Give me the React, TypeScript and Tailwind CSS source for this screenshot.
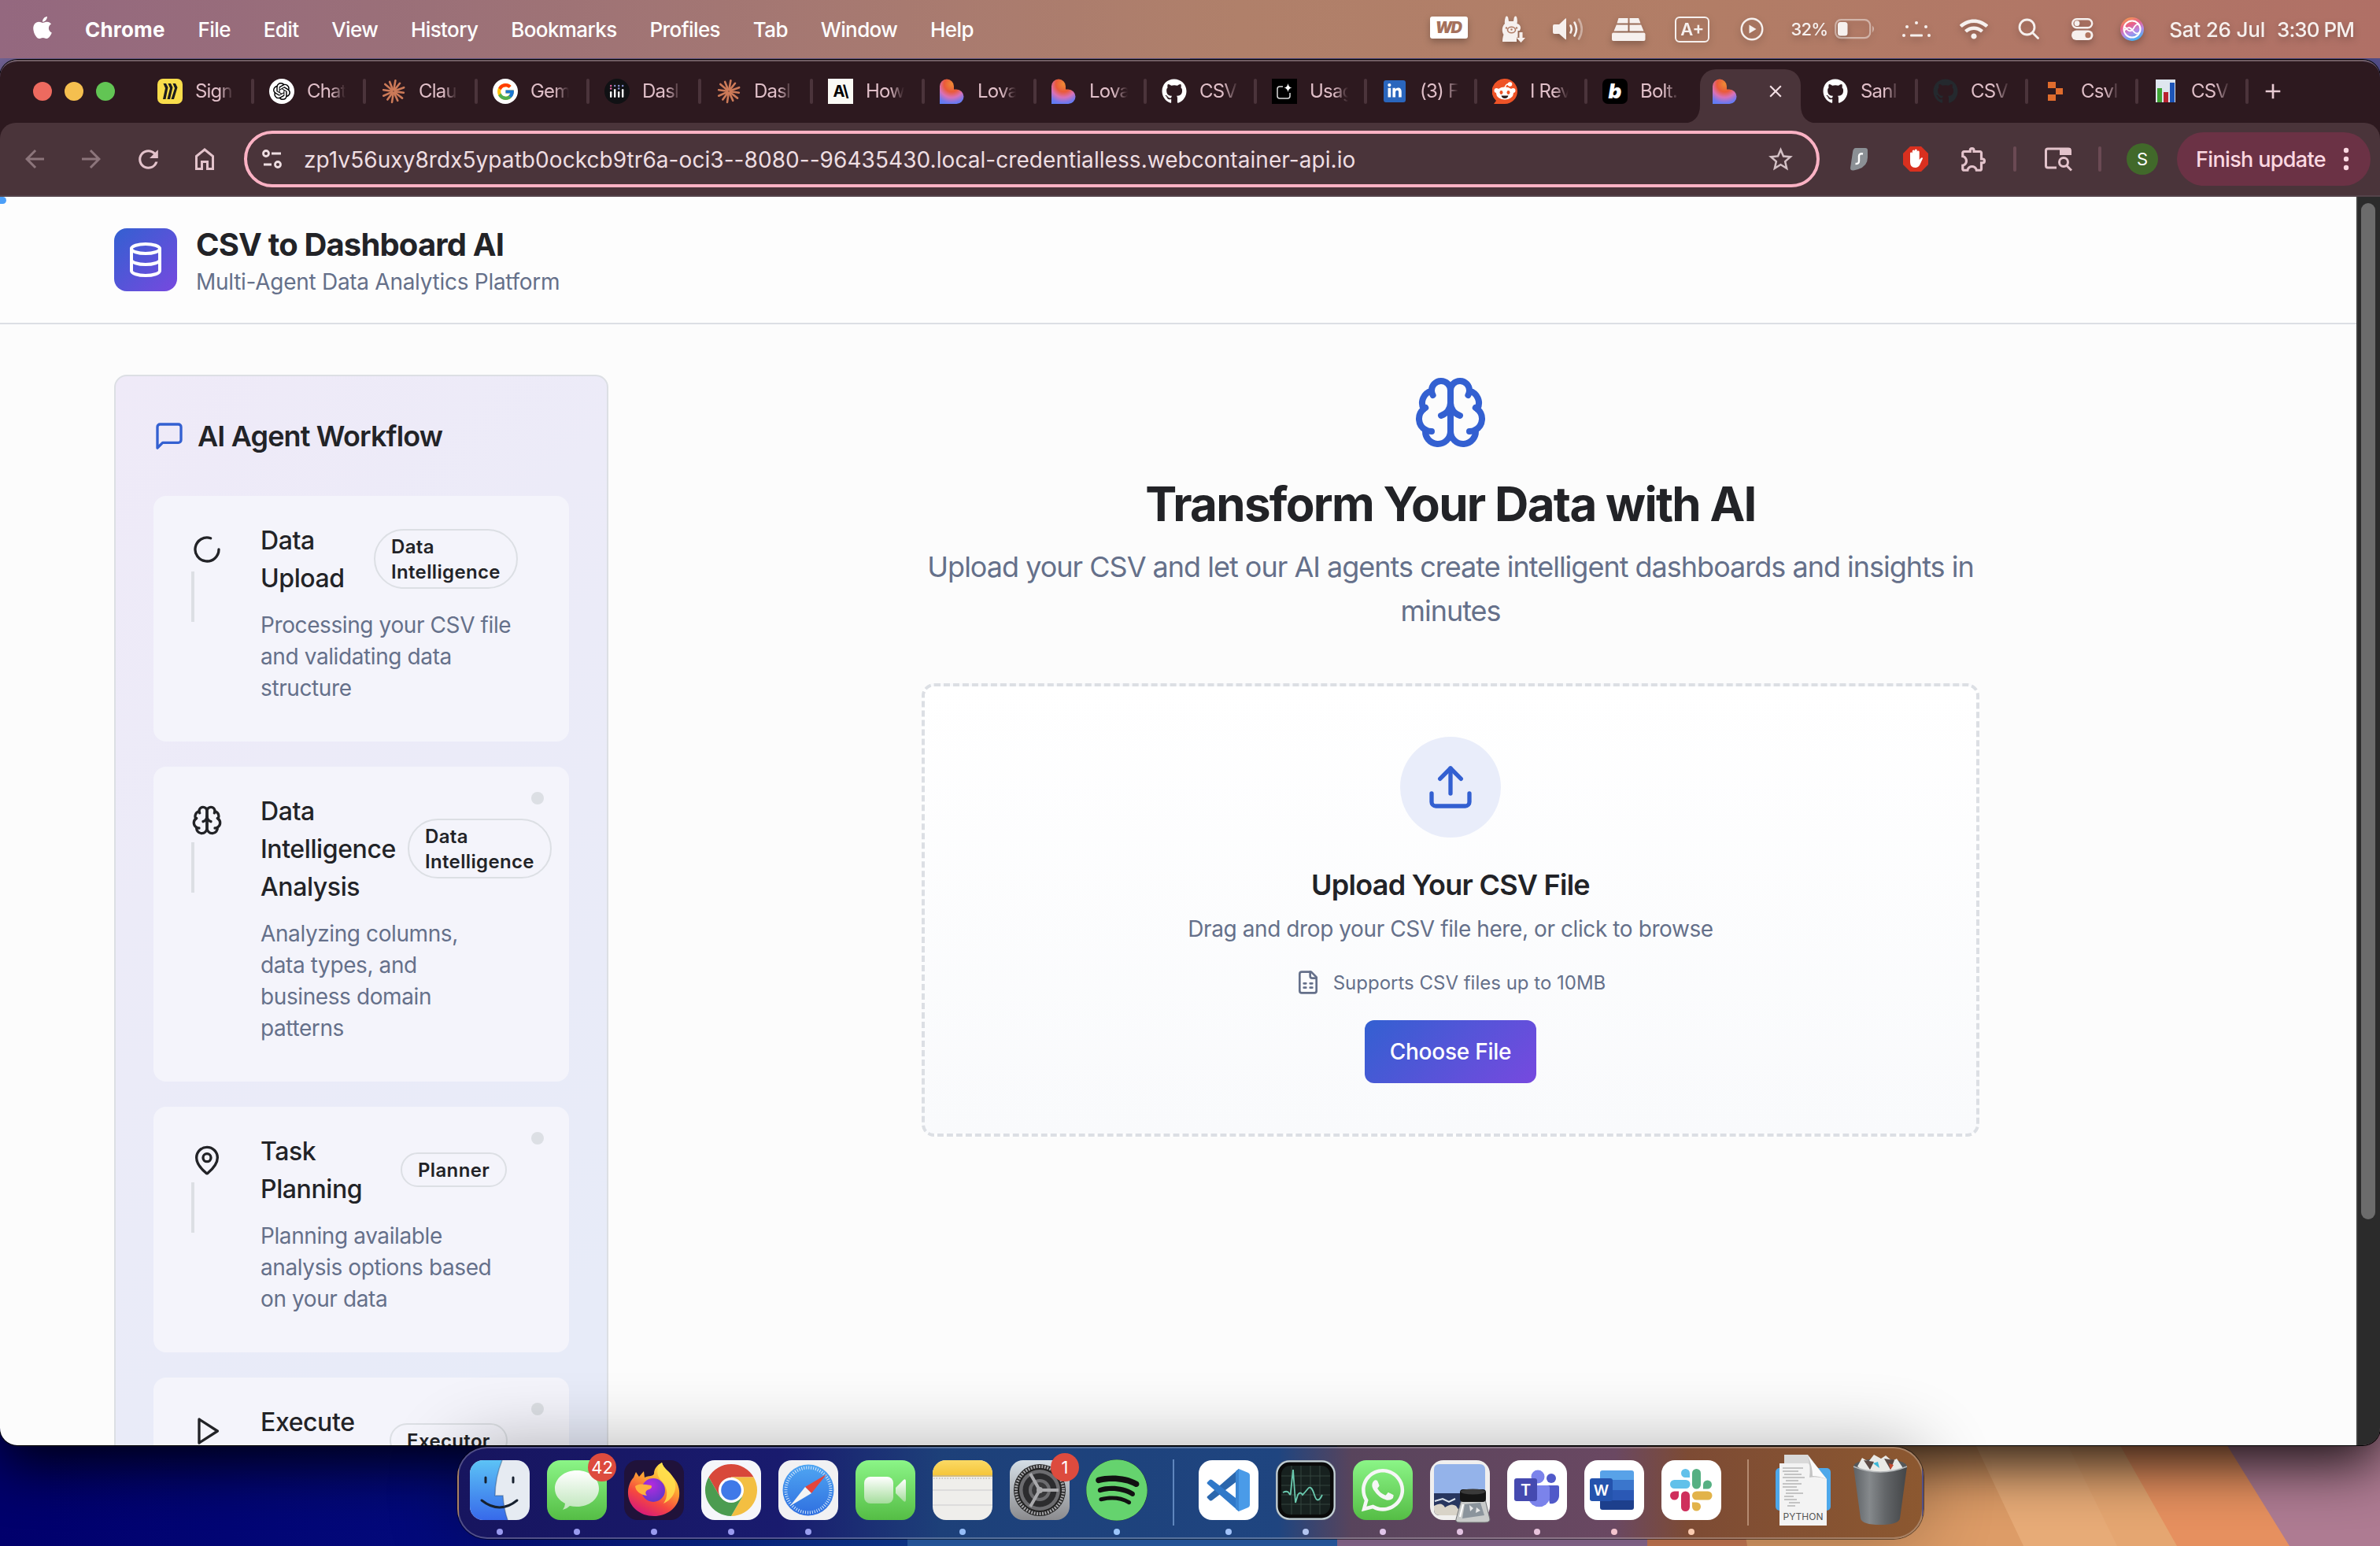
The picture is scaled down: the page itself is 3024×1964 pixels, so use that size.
import React from "react";
import { FaApple, FaGithub, FaWifi, FaWhatsapp, FaLinkedinIn, FaSpotify } from "react-icons/fa";
import { FcGoogle } from "react-icons/fc";
import { SiOpenai } from "react-icons/si";
import { MdArrowBack, MdArrowForward, MdRefresh, MdStarOutline, MdOutlineExtension, MdClose, MdAdd } from "react-icons/md";

type Kids = { children?: React.ReactNode };

function Glyph({ size, stroke = 2, className = "", children }: Kids & { size: number; stroke?: number; className?: string }) {
  return (
    <svg width={size} height={size} viewBox="0 0 24 24" fill="none" stroke="currentColor" strokeWidth={stroke} strokeLinecap="round" strokeLinejoin="round" className={"shrink-0 " + className}>
      {children}
    </svg>
  );
}

const brain = (
  <>
    <path d="M12 5a3 3 0 1 0-5.997.125 4 4 0 0 0-2.526 5.77 4 4 0 0 0 .556 6.588A4 4 0 1 0 12 18Z" />
    <path d="M12 5a3 3 0 1 1 5.997.125 4 4 0 0 1 2.526 5.77 4 4 0 0 1-.556 6.588A4 4 0 1 1 12 18Z" />
    <path d="M15 13a4.5 4.5 0 0 1-3-4 4.5 4.5 0 0 1-3 4" />
    <path d="M17.599 6.5a3 3 0 0 0 .399-1.375" />
    <path d="M6.003 5.125A3 3 0 0 0 6.401 6.5" />
    <path d="M3.477 10.896a4 4 0 0 1 .585-.396" />
    <path d="M19.938 10.5a4 4 0 0 1 .585.396" />
    <path d="M6 18a4 4 0 0 1-1.967-.516" />
    <path d="M19.967 17.484A4 4 0 0 1 18 18" />
  </>
);

/* ---------- menu bar ---------- */

function MenuBar() {
  return (
    <div className="relative z-10 flex h-[74px] w-full items-center bg-[linear-gradient(90deg,#94687f_0%,#9b7078_18%,#a87a70_38%,#b0806a_52%,#b27d66_72%,#b07066_100%)] pl-[40px] text-[26px] font-medium text-white">
      <FaApple className="-mt-1 h-[32px] w-[28px]" />
      <div className="ml-[40px] flex items-center gap-[41.8px] tracking-[-0.6px]">
        <span className="font-bold tracking-[0.2px]">Chrome</span>
        <span>File</span>
        <span>Edit</span>
        <span>View</span>
        <span>History</span>
        <span>Bookmarks</span>
        <span>Profiles</span>
        <span>Tab</span>
        <span>Window</span>
        <span>Help</span>
      </div>
      <div className="ml-auto flex items-center pr-[33px] text-[#f6f0ee] drop-shadow-[0_4px_4px_rgba(0,0,0,0.25)]">
        <span className="-mt-[4px] flex h-[28px] w-[48px] items-center justify-center rounded-[3px] bg-white pr-[3px] text-[20px] font-black italic tracking-[-2px] text-[#a5715c]">WD</span>
        <svg className="ml-[43px]" width="30" height="34" viewBox="0 0 30 34" fill="#f6f0ee">
          <path d="M5 1.500c1.500-2 3.200-.5 3.500 2.500l.5 3h6l.5-3c.3-3 2-4.500 3.500-2.500 1 3 1 6 .5 8.500q5 1.500 4.500 6l-1 3h-2.500v10.500l-1.500-1V33H1c0-4 .5-6 1.500-9C0 20 0 14 4 10 3.500 7.500 4 4.500 5 1.500z" />
          <ellipse cx="12.500" cy="18" rx="5" ry="3.800" fill="none" stroke="#b07c66" strokeWidth="1.600" />
          <circle cx="12.500" cy="17.500" r="1.200" fill="#b07c66" />
          <circle cx="6" cy="15.500" r="1.200" fill="#b07c66" />
          <circle cx="19" cy="15.500" r="1.200" fill="#b07c66" />
          <path d="M22.500 21h4v7h3.500l-5.500 6-5.500-6h3.500z" stroke="#b07c66" strokeWidth="1" paintOrder="stroke" />
        </svg>
        <svg className="ml-[35px]" width="39" height="30" viewBox="0 0 39 30" fill="none" stroke="#f6f0ee" strokeWidth="2.600" strokeLinecap="round">
          <path d="M0 11q0-2 2-2h6l8-7.500q1-.8 1 .8v25q0 1.600-1 .8L8 21H2q-2 0-2-2z" fill="#f6f0ee" stroke="none" />
          <path d="M22.500 10.500q2.500 4.500 0 9M27.500 6.500q5 8.500 0 17" />
          <path d="M33 2.500q7.500 12.500 0 25" opacity=".45" />
        </svg>
        <svg className="ml-[36px]" width="43" height="29" viewBox="0 0 43 29" fill="#f6f0ee">
          <path d="M8.500 0H20.500V6.500H6.500zM22.500 0H34l2.500 6.500h-14zM5.800 8.500H20.500V16.500H2.500zM22.500 8.500H37.200l3.300 8h-18z" />
          <rect y="18.500" width="42.500" height="10.500" rx="2" />
        </svg>
        <span className="ml-[37px] flex h-[33px] w-[44px] items-center justify-center rounded-[6px] border-[2.500px] border-[#f6f0ee] text-[22px] font-semibold">A+</span>
        <svg className="ml-[39px]" width="30" height="30" viewBox="0 0 30 30" fill="none" stroke="#f6f0ee" strokeWidth="2.400">
          <circle cx="15" cy="15" r="13.300" />
          <path d="M11.500 9.500l9 5.500-9 5.500z" fill="#f6f0ee" stroke="none" />
        </svg>
        <span className="ml-[34px] text-[22px] tracking-[-0.8px]">32%</span>
        <svg className="ml-[9px]" width="52" height="26" viewBox="0 0 52 26">
          <rect x="1.200" y="1.200" width="44" height="23" rx="7" fill="none" stroke="#f6f0ee" strokeOpacity=".5" strokeWidth="2.200" />
          <rect x="4" y="4" width="12.500" height="17.500" rx="3.500" fill="#f6f0ee" />
          <path d="M48 8.500q4 4 0 9z" fill="#f6f0ee" fillOpacity=".5" />
        </svg>
        <svg className="ml-[33px]" width="38" height="22" viewBox="0 0 38 22" fill="#f6f0ee">
          <circle cx="19" cy="3" r="2" /><circle cx="7" cy="8" r="2" /><circle cx="31" cy="8" r="2" /><circle cx="3" cy="19" r="2" /><circle cx="35" cy="19" r="2" />
          <rect x="11" y="17.500" width="16" height="3" rx="1" />
        </svg>
        <FaWifi className="ml-[36px] h-[30px] w-[36px]" />
        <svg className="ml-[38px]" width="28" height="28" viewBox="0 0 28 28" fill="none" stroke="#f6f0ee" strokeWidth="2.800" strokeLinecap="round">
          <circle cx="11.500" cy="11.500" r="9.500" /><path d="M18.500 18.500l7 7" />
        </svg>
        <svg className="ml-[40px]" width="28" height="28" viewBox="0 0 28 28" fill="none" stroke="#f6f0ee" strokeWidth="2.400">
          <rect x="1.200" y="1.200" width="25" height="11" rx="5.500" /><circle cx="7" cy="6.700" r="3.400" fill="#f6f0ee" stroke="none" />
          <rect x="0" y="15.500" width="27.500" height="12.500" rx="6.200" fill="#f6f0ee" stroke="none" /><circle cx="21" cy="21.700" r="3.600" fill="#b0745f" stroke="none" />
        </svg>
        <svg className="ml-[34px]" width="30" height="30" viewBox="0 0 30 30">
          <defs>
            <linearGradient id="siri" x1=".2" y1="0" x2=".6" y2="1"><stop offset="0" stopColor="#f5a04a" /><stop offset=".35" stopColor="#e85f8a" /><stop offset=".65" stopColor="#b58be8" /><stop offset="1" stopColor="#3bb3f2" /></linearGradient>
          </defs>
          <circle cx="15" cy="15" r="15" fill="url(#siri)" />
          <circle cx="15" cy="15" r="10.500" fill="none" stroke="#fff" strokeWidth="2" />
          <path d="M5 17c6-6 8-4 11 0s6 5 9 1M6 12c5 8 9 6 12 0 2-3 4-4 6-2" fill="none" stroke="#fff" strokeWidth="1.800" />
        </svg>
        <span className="ml-[32px] tracking-[-0.2px]">Sat 26 Jul</span>
        <span className="ml-[15px] tracking-[-0.95px]">3:30 PM</span>
      </div>
    </div>
  );
}

/* ---------- tab strip ---------- */

function Lovable() {
  return (
    <svg width="32" height="32" viewBox="0 0 32 32">
      <defs>
        <radialGradient id="lov" cx=".5" cy=".2" r=".9"><stop offset="0" stopColor="#ef8a35" /><stop offset=".35" stopColor="#ea5a3a" /><stop offset=".6" stopColor="#d871b8" /><stop offset=".85" stopColor="#6f79ef" /><stop offset="1" stopColor="#5a7df5" /></radialGradient>
      </defs>
      <path d="M0 9.500a9 9 0 0 1 18 0v4h3a9.300 9.300 0 0 1 9.500 9.300A9.200 9.200 0 0 1 21.300 32H0z" fill="url(#lov)" />
    </svg>
  );
}

function Claude() {
  return (
    <svg width="32" height="32" viewBox="-16 -16 32 32" stroke="#cc7a58" strokeWidth="2.600" strokeLinecap="round">
      {[0, 30, 58, 90, 118, 148, 180, 212, 240, 272, 300, 332].map((a, i) => (
        <path key={a} d={i % 2 ? "M2 0H14" : "M2 0H13"} transform={`rotate(${a + 8})`} />
      ))}
    </svg>
  );
}

const favicons: Record<string, React.ReactNode> = {
  miro: (
    <svg width="32" height="32" viewBox="0 0 32 32"><rect width="32" height="32" rx="7" fill="#f9dd4b" /><path d="M7.500 6h3.500l2.500 5-3 15H7l3-14zM13.500 6H17l2.500 5-3.500 15h-3.500L16 12zM19.500 6H23l2.500 5L21 26h-3.500L22 12z" fill="#1c1c1e" /></svg>
  ),
  openai: <span className="flex size-[32px] items-center justify-center rounded-full bg-white text-black"><SiOpenai className="size-[22px]" /></span>,
  claude: <Claude />,
  google: <span className="flex size-[32px] items-center justify-center rounded-full bg-white"><FcGoogle className="size-[25px]" /></span>,
  plotly: (
    <svg width="32" height="32" viewBox="0 0 32 32"><circle cx="16" cy="16" r="16" fill="#101114" />
      <g fill="#f4f4f4"><rect x="7" y="16" width="2.400" height="8" rx="1.200" /><rect x="12" y="13" width="2.400" height="11" rx="1.200" /><rect x="17" y="16" width="2.400" height="8" rx="1.200" /><rect x="22" y="13" width="2.400" height="11" rx="1.200" /></g>
      <g fill="#8b95d8"><circle cx="8.200" cy="9" r="1.200" fill="#e56aa8" /><circle cx="13.200" cy="9" r="1.200" /><circle cx="18.200" cy="9" r="1.200" /><circle cx="23.200" cy="9" r="1.200" /><circle cx="8.200" cy="12.500" r="1.200" fill="#e56aa8" /><circle cx="18.200" cy="12.500" r="1.200" /></g>
    </svg>
  ),
  anthropic: <span className="flex size-[32px] items-center justify-center bg-[#fafaf5] text-[20px] font-bold tracking-[-1px] text-black">A\</span>,
  lovable: <Lovable />,
  github: <FaGithub className="size-[32px] text-white" />,
  githubDark: <FaGithub className="size-[32px] text-[#24292e]" />,
  usage: (
    <svg width="32" height="32" viewBox="0 0 32 32"><rect width="32" height="32" fill="#000" /><path d="M14 10H10q-3 0-3 3v9q0 3 3 3h10q3 0 3-3v-4" fill="none" stroke="#ddd" strokeWidth="1.500" /><path d="M20.500 6q.8 5 5 5.500-4.200.7-5 5.500-.8-4.800-5-5.500 4.200-.5 5-5.500z" fill="#fff" /></svg>
  ),
  linkedin: <span className="flex size-[32px] items-center justify-center"><span className="flex size-[28px] items-center justify-center rounded-[3px] bg-[#2a66bd] text-white"><FaLinkedinIn className="size-[20px]" /></span></span>,
  reddit: (
    <svg width="32" height="32" viewBox="0 0 32 32"><path d="M16 0a16 16 0 1 1 0 32H2l3-4A16 16 0 0 1 16 0z" fill="#ee5327" /><path d="M16 12q1-6 6-5" stroke="#fff" strokeWidth="1.600" fill="none" /><circle cx="22.500" cy="7" r="2.800" fill="#fff" /><circle cx="5.500" cy="15" r="3" fill="#fff" /><circle cx="26.500" cy="15" r="3" fill="#fff" /><ellipse cx="16" cy="18.500" rx="11" ry="8" fill="#fff" /><ellipse cx="11.500" cy="17.500" rx="2" ry="2.400" fill="#ee5327" /><ellipse cx="20.500" cy="17.500" rx="2" ry="2.400" fill="#ee5327" /><path d="M11.500 21.500h9q-1 3.500-4.500 3.500t-4.500-3.500z" fill="#2b1b1b" /></svg>
  ),
  bolt: <span className="flex size-[32px] items-center justify-center rounded-[7px] bg-black pb-[2px] text-[26px] font-black italic text-white">b</span>,
  blocks: (
    <svg width="32" height="32" viewBox="0 0 32 32" fill="#e06c2d"><path d="M6 4h10v8H6zM6 20h10v8H6zM16 12h9v8H16z" /></svg>
  ),
  chart: (
    <svg width="32" height="32" viewBox="0 0 32 32"><rect x="3" y="1" width="25" height="29" fill="#dfe6ef" /><rect x="5" y="12" width="6" height="18" fill="#3fa535" /><rect x="13" y="17" width="6" height="13" fill="#b8232f" /><rect x="21" y="5" width="6" height="25" fill="#1d55b8" /></svg>
  ),
};

const tabsBefore: [string, string][] = [
  ["miro", "Sign"], ["openai", "Chat"], ["claude", "Clau"], ["google", "Gem"], ["plotly", "Dasl"], ["claude", "Dasl"], ["anthropic", "How"], ["lovable", "Lova"],
  ["lovable", "Lova"], ["github", "CSV"], ["usage", "Usag"], ["linkedin", "(3) F"], ["reddit", "I Rev"], ["bolt", "Bolt."],
];
const tabsAfter: [string, string][] = [["github", "Sanl"], ["githubDark", "CSV"], ["blocks", "Csvl"], ["chart", "CSV"]];

function Tab({ icon, label, wide, divider = true }: { icon: string; label: string; wide: boolean; divider?: boolean }) {
  return (
    <div className={wide ? "flex w-[142px] shrink-0 items-center" : "flex w-[140px] shrink-0 items-center"}>
      {favicons[icon]}
      <span className="ml-[16px] w-[50px] whitespace-nowrap text-[24px] leading-[32px] tracking-[-0.8px] text-[#e0bfc8] [mask-image:linear-gradient(90deg,#000_62%,transparent_98%)]">{label}</span>
      {divider && <span className={wide ? "ml-[21px] h-[32px] w-[4px] rounded-full bg-[#4b343b]" : "ml-[19px] h-[32px] w-[4px] rounded-full bg-[#4b343b]"} />}
    </div>
  );
}

function TabStrip() {
  return (
    <div className="flex h-[78px] items-center bg-[#2d191f] pb-[2px] pl-[42px]">
      <div className="flex gap-[16px]">
        <span className="size-[24px] rounded-full bg-[#ed6a5f]" />
        <span className="size-[24px] rounded-full bg-[#f5bf4f]" />
        <span className="size-[24px] rounded-full bg-[#62c554]" />
      </div>
      <div className="ml-[54px] flex items-center">
        {tabsBefore.map(([icon, label], i) => (
          <Tab key={i} icon={icon} label={label} wide={i < 8} divider={i < 13} />
        ))}
        <div className="relative flex h-[78px] w-[140px] shrink-0 items-center">
          <div className="absolute -left-[16px] top-[11px] h-[69px] w-[128px] rounded-t-[20px] bg-[#4a343a]" />
          <svg className="absolute -left-[40px] top-[56px]" width="176" height="24" viewBox="0 0 176 24" fill="#4a343a"><path d="M0 24q24 0 24-24v24zM176 24q-24 0-24-24v24z" /></svg>
          <span className="relative"><Lovable /></span>
          <MdClose className="relative ml-[35px] size-[26px] text-[#f3dfe4]" />
        </div>
        {tabsAfter.map(([icon, label], i) => (
          <Tab key={i} icon={icon} label={label} wide={false} />
        ))}
        <MdAdd className="ml-[-4px] size-[32px] text-[#e8cbd3]" />
      </div>
    </div>
  );
}

/* ---------- toolbar ---------- */

function Cell({ children }: Kids) {
  return <div className="flex w-[72px] shrink-0 items-center justify-center">{children}</div>;
}

function Toolbar() {
  return (
    <div className="bg-[#2d191f]">
      <div className="flex h-[94px] items-center rounded-t-[20px] border-b-2 border-[#54434a] bg-[#4a343a] pl-[8px] text-[#e3c3cb]">
        <Cell><MdArrowBack className="size-[36px] text-[#8c757b]" /></Cell>
        <Cell><MdArrowForward className="size-[36px] text-[#8c757b]" /></Cell>
        <Cell><MdRefresh className="size-[37px]" /></Cell>
        <Cell>
          <svg width="26" height="30" viewBox="0 0 26 30" fill="none" stroke="currentColor" strokeWidth="3"><path d="M2.500 11.500L13 3l10.500 8.500V27.500h-7V18.500h-7v9h-7z" /></svg>
        </Cell>
        <div className="ml-[14px] flex h-[72px] w-[2002px] items-center rounded-full border-[4px] border-[#fbb2c4] pl-[19px] pr-[27px]">
          <svg width="26" height="24" viewBox="0 0 26 24" fill="none" stroke="#eddde1" strokeWidth="2.800"><circle cx="5" cy="5" r="3.500" /><path d="M12 5h12M2 19h10" /><circle cx="20" cy="19" r="3.500" /></svg>
          <span className="ml-[27px] translate-y-[1px] whitespace-nowrap text-[28px] tracking-[0.06px] text-[#eedee2]">zp1v56uxy8rdx5ypatb0ockcb9tr6a-oci3--8080--96435430.local-credentialless.webcontainer-api.io</span>
          <MdStarOutline className="ml-auto size-[37px] text-[#d3c0c5]" />
        </div>
        <div className="ml-[14px] flex items-center">
          <Cell>
            <svg width="24" height="30" viewBox="0 0 24 30"><path d="M8 1h12q3 0 3 3v9q0 11-12 15l-6 1.500q-4 .5-4-3l3-20Q4.500 1 8 1z" fill="#8b9095" /><path d="M17 8.500q-5-1-5 3v6q0 4-4.500 3.500" fill="none" stroke="#fff" strokeWidth="2.400" /></svg>
          </Cell>
          <Cell>
            <svg width="34" height="34" viewBox="0 0 34 34"><path d="M10 1h14l9 9v14l-9 9H10l-9-9V10z" fill="#d9301f" /><path d="M10 18v-8a1.400 1.400 0 0 1 2.800 0V7a1.500 1.500 0 0 1 3 0V6a1.500 1.500 0 0 1 3 0v2a1.400 1.400 0 0 1 2.900 0v10l2.300-2.500q2-.8 2 .8L22.500 24q-2 4-6 4-6.500 0-6.500-7z" fill="#fff" /></svg>
          </Cell>
          <div className="flex w-[76px] justify-center"><MdOutlineExtension className="size-[38px]" /></div>
          <span className="ml-[12px] h-[32px] w-[4px] rounded-full bg-[#6b4a54]" />
          <svg className="ml-[35px]" width="36" height="32" viewBox="0 0 36 32" fill="none" stroke="currentColor" strokeWidth="3"><path d="M16 27H5q-2.500 0-2.500-2.500V5.500Q2.500 3 5 3h26q2.500 0 2.500 2.500V11" /><path d="M20 2h14v9H20z" fill="currentColor" stroke="none" /><circle cx="25" cy="20" r="5.500" /><path d="M29 24.500l6 6" /></svg>
          <span className="ml-[33px] h-[32px] w-[4px] rounded-full bg-[#6b4a54]" />
          <span className="ml-[32px] flex size-[40px] items-center justify-center rounded-full bg-[#41692a] text-[22px] text-white">S</span>
          <div className="ml-[24px] flex h-[68px] w-[246px] items-center rounded-full bg-[#6b3245] pl-[24px] text-[27px] font-medium text-[#fbd8e1]">
            <span className="translate-y-[1px] whitespace-nowrap tracking-[-0.65px]">Finish update</span>
            <svg className="ml-[22px]" width="8" height="30" viewBox="0 0 8 30" fill="#fbd8e1"><circle cx="4" cy="4" r="3.200" /><circle cx="4" cy="15" r="3.200" /><circle cx="4" cy="26" r="3.200" /></svg>
          </div>
        </div>
      </div>
    </div>
  );
}

/* ---------- workflow sidebar ---------- */

type Step = { icon: React.ReactNode; title: string[]; badge: string[]; gap: string; lines: string[]; pending: boolean };

const steps: Step[] = [
  { icon: <path d="M21 12a9 9 0 1 1-6.219-8.560" />, title: ["Data", "Upload"], badge: ["Data", "Intelligence"], gap: "w-[144px]", lines: ["Processing your CSV file", "and validating data", "structure"], pending: false },
  { icon: brain, title: ["Data", "Intelligence", "Analysis"], badge: ["Data", "Intelligence"], gap: "w-[187px]", lines: ["Analyzing columns,", "data types, and", "business domain", "patterns"], pending: true },
  { icon: <><path d="M20 10c0 4.993-5.539 10.193-7.399 11.799a1 1 0 0 1-1.202 0C9.539 20.193 4 14.993 4 10a8 8 0 0 1 16 0" /><circle cx="12" cy="10" r="3" /></>, title: ["Task", "Planning"], badge: ["Planner"], gap: "w-[178px]", lines: ["Planning available", "analysis options based", "on your data"], pending: true },
  { icon: <polygon points="6 3 20 12 6 21 6 3" />, title: ["Execute"], badge: ["Executor"], gap: "w-[164px]", lines: [], pending: true },
];

function StepCard({ step }: { step: Step }) {
  return (
    <div className="relative flex rounded-[16px] bg-[#f4f4fb] pb-[48px] pl-[48px] pt-[32px]">
      {step.pending && <span className="absolute right-[32px] top-[32px] size-[16px] rounded-full bg-[#dcdfe4]" />}
      <div className="mt-[16px] w-[88px] shrink-0 text-[#222327]">
        <Glyph size={40}>{step.icon}</Glyph>
        <div className="mt-[8px] h-[64px] w-[4px] bg-[#dcdfe4]" />
      </div>
      <div>
        <div className="flex min-h-[96px] items-center">
          <div className={"min-h-[96px] shrink-0 translate-y-[1px] text-[32px] font-medium leading-[48px] tracking-[-0.4px] text-[#222327] " + step.gap}>
            {step.title.map((t) => <div key={t}>{t}</div>)}
          </div>
          <div className="shrink-0 rounded-full border-2 border-[#dcdfe4] px-[20px] pb-[3px] pt-[5px] text-[24px] font-semibold leading-[32px] tracking-[0.35px] text-[#222327]">
            {step.badge.map((t) => <div key={t}>{t}</div>)}
          </div>
        </div>
        <div className="mt-[16px] text-[28px] leading-[40px] tracking-[-0.4px] text-[#65708a]">
          {step.lines.map((t) => <div key={t}>{t}</div>)}
        </div>
      </div>
    </div>
  );
}

function Page() {
  return (
    <div className="flex h-[1586px] overflow-hidden">
      <div className="relative w-[2994px] bg-[#fcfcfc]">
        <span className="absolute left-0 top-0 h-[9px] w-[8px] rounded-r-full bg-[#4c9ff8]" />
        <div className="flex h-[162px] items-center border-b-2 border-[#dcdfe4] bg-[#fdfdfd] pl-[145px]">
          <div className="flex size-[80px] items-center justify-center rounded-[16px] bg-[linear-gradient(135deg,#3360d1,#7749df)] text-white">
            <Glyph size={48}><ellipse cx="12" cy="5" rx="9" ry="3" /><path d="M3 5V19A9 3 0 0 0 21 19V5" /><path d="M3 12A9 3 0 0 0 21 12" /></Glyph>
          </div>
          <div className="ml-[24px]">
            <div className="translate-y-[1px] text-[40px] font-bold leading-[56px] tracking-[-0.85px] text-[#222327]">CSV to Dashboard AI</div>
            <div className="text-[28px] leading-[40px] tracking-[-0.28px] text-[#65708a]">Multi-Agent Data Analytics Platform</div>
          </div>
        </div>
        <div className="flex items-start gap-[64px] pl-[145px] pt-[64px]">
          <div className="h-[1900px] w-[628px] shrink-0 rounded-[16px] border-2 border-[#dcdfe4] bg-[linear-gradient(135deg,#efeaf8_0%,#ecebf8_28%,#e7ebf8_70%)] p-[48px]">
            <div className="flex h-[56px] items-center">
              <Glyph size={40} className="text-[#3360d1]"><path d="M21 15a2 2 0 0 1-2 2H7l-4 4V5a2 2 0 0 1 2-2h14a2 2 0 0 1 2 2z" /></Glyph>
              <div className="ml-[16px] text-[36px] font-semibold tracking-[-0.85px] text-[#222327]">AI Agent Workflow</div>
            </div>
            <div className="mt-[48px] flex flex-col gap-[32px]">
              {steps.map((s) => <StepCard key={s.title.join()} step={s} />)}
            </div>
          </div>
          <div className="flex w-[2012px] flex-col items-center">
            <Glyph size={96} className="text-[#3360d1]">{brain}</Glyph>
            <div className="mt-[32px] text-[60px] font-bold leading-[72px] tracking-[-1.7px] text-[#222327]">Transform Your Data with AI</div>
            <div className="mt-[16px] w-[1344px] text-center text-[36px] leading-[56px] tracking-[-1px] text-[#65708a]">Upload your CSV and let our AI agents create intelligent dashboards and insights in<br />minutes</div>
            <div className="mt-[64px] flex h-[576px] w-[1344px] flex-col items-center rounded-[16px] border-[4px] border-dashed border-[#dcdfe4] bg-[linear-gradient(180deg,#fff,#f9fafc)] pt-[64px]">
              <div className="flex size-[128px] items-center justify-center rounded-full bg-[#e9edfa] text-[#3360d1]">
                <Glyph size={64}><path d="M21 15v4a2 2 0 0 1-2 2H5a2 2 0 0 1-2-2v-4" /><polyline points="17 8 12 3 7 8" /><path d="M12 3v12" /></Glyph>
              </div>
              <div className="mt-[32px] text-[36px] font-semibold leading-[56px] tracking-[-0.75px] text-[#222327]">Upload Your CSV File</div>
              <div className="mt-[8px] text-[28px] leading-[40px] tracking-[-0.41px] text-[#65708a]">Drag and drop your CSV file here, or click to browse</div>
              <div className="mt-[32px] flex h-[32px] items-center gap-[16px] text-[24px] text-[#65708a]">
                <Glyph size={32}><path d="M15 2H6a2 2 0 0 0-2 2v16a2 2 0 0 0 2 2h12a2 2 0 0 0 2-2V7Z" /><path d="M14 2v4a2 2 0 0 0 2 2h4" /><path d="M8 13h2M14 13h2M8 17h2M14 17h2" /></Glyph>
                <span className="translate-y-[1px]">Supports CSV files up to 10MB</span>
              </div>
              <div className="mt-[32px] flex h-[80px] w-[218px] items-center justify-center rounded-[12px] bg-[linear-gradient(135deg,#3360d1,#7749df)] text-[28px] font-medium tracking-[-0.25px] text-white">Choose File</div>
            </div>
          </div>
        </div>
      </div>
      <div className="w-[30px] border-l-2 border-[#3d3d3d] bg-[#2b2b2b] pl-[4px] pt-[8px]">
        <div className="h-[1291px] w-[18px] rounded-full bg-[#6b6b6b]" />
      </div>
    </div>
  );
}

/* ---------- dock ---------- */

function AppIcon({ bg, children }: Kids & { bg?: string }) {
  return (
    <svg width="76" height="76" viewBox="0 0 76 76" className="overflow-visible">
      {bg && <rect width="76" height="76" rx="17" fill={bg} />}
      {children}
    </svg>
  );
}

const dockLeft: { dot: string; badge?: string; icon: React.ReactNode }[] = [
  { dot: "bg-[#9a9bf0]", icon: (
    <AppIcon bg="#e6ebf2">
      <defs><linearGradient id="fb" x2="0" y2="1"><stop stopColor="#5cc3f6" /><stop offset="1" stopColor="#3769ea" /></linearGradient></defs>
      <path d="M17 0H41Q32 22 32 45H42Q43 62 48 76H17A17 17 0 0 1 0 59V17A17 17 0 0 1 17 0z" fill="url(#fb)" />
      <path d="M20 22v6M55 22v6M15 51q23 18 45 0" stroke="#16202e" strokeWidth="3" fill="none" strokeLinecap="round" />
      <path d="M41 0Q32 22 32 45H42Q43 62 48 76" stroke="#27466e" strokeOpacity=".4" strokeWidth="1.500" fill="none" />
    </AppIcon>) },
  { dot: "bg-[#9a9bf0]", badge: "42", icon: (
    <AppIcon bg="url(#ms)">
      <defs><linearGradient id="ms" x2="0" y2="1"><stop stopColor="#8bf587" /><stop offset="1" stopColor="#55bd45" /></linearGradient><linearGradient id="mb" x2="0" y2="1"><stop stopColor="#fff" /><stop offset="1" stopColor="#bfe6bb" /></linearGradient></defs>
      <path d="M38 13c16 0 28 10 28 23S54 59 38 59q-5 0-9-1-4 4-9 5 3-4 3-8C15 51 10 44 10 36c0-13 12-23 28-23z" fill="url(#mb)" />
    </AppIcon>) },
  { dot: "bg-[#9a9bf0]", icon: (
    <AppIcon bg="#20123a">
      <defs><linearGradient id="ff" x1=".8" y1="0" x2=".3" y2="1"><stop stopColor="#fff04f" /><stop offset=".4" stopColor="#fda132" /><stop offset=".7" stopColor="#f5483f" /><stop offset="1" stopColor="#d6187c" /></linearGradient><radialGradient id="fp" cx=".4" cy=".3" r=".8"><stop stopColor="#b52be0" /><stop offset="1" stopColor="#5a38c8" /></radialGradient></defs>
      <path d="M48 3c2 8 10 12 13 17 7 8 10 16 9 26-2 15-16 25-32 25C20 71 6 59 5 43c-.5-9 3-17 7-21l3-7 4 6 6-7 1 8c6-3 11-1 12-5 0-6 4-11 10-14z" fill="url(#ff)" />
      <circle cx="37" cy="38" r="15" fill="url(#fp)" />
      <path d="M14 33c6-4 12-2 20-1 2 1 1 4-2 5-5 1-6 5-3 8-8-1-14-5-15-12z" fill="#ffb13d" />
      <path d="M48 3c-9 8-6 18 0 24 8 8 8 20 2 28 14-6 20-22 11-35C58 14 50 11 48 3z" fill="#ffe04d" opacity=".85" />
    </AppIcon>) },
  { dot: "bg-[#9a9bf0]", icon: (
    <AppIcon bg="#f5f6fa">
      <g transform="translate(38 38)">
        <path d="M-28.600-16.500A33 33 0 0 1 28.600-16.500L0-16.500-14.300 8.200z" fill="#d8483a" />
        <path d="M28.600-16.500A33 33 0 0 1 0 33L14.300 8.200 0-16.500z" fill="#f3bf42" />
        <path d="M0 33A33 33 0 0 1-28.600-16.500L-14.300 8.200 14.300 8.200z" fill="#4c9c50" />
        <circle r="16" fill="#fff" /><circle r="12.800" fill="#3f79e8" />
      </g>
    </AppIcon>) },
  { dot: "bg-[#9a9ff0]", icon: (
    <AppIcon bg="#f1f1f3">
      <defs><linearGradient id="sf" x2="0" y2="1"><stop stopColor="#4fa6f2" /><stop offset="1" stopColor="#2f6fe0" /></linearGradient></defs>
      <circle cx="38" cy="38" r="32.500" fill="url(#sf)" />
      <circle cx="38" cy="38" r="28.500" fill="none" stroke="#d6e8fb" strokeWidth="4" strokeDasharray="1 1.985" />
      <path d="M61 18L42 42 34 34z" fill="#e5453a" /><path d="M15 58L42 42 34 34z" fill="#f4f4f4" />
    </AppIcon>) },
  { dot: "", icon: (
    <AppIcon bg="url(#ms)">
      <defs><linearGradient id="fv" x2="0" y2="1"><stop stopColor="#fff" /><stop offset="1" stopColor="#a5dd9c" /></linearGradient></defs>
      <rect x="11" y="21" width="37" height="34" rx="8" fill="url(#fv)" /><path d="M51 35l10-10q3-2 3 2v23q0 4-3 2L51 42z" fill="url(#fv)" />
    </AppIcon>) },
  { dot: "bg-[#96bdf8]", icon: (
    <AppIcon bg="#efeeeb">
      <defs><linearGradient id="nt" x2="0" y2="1"><stop stopColor="#fbd964" /><stop offset="1" stopColor="#f5c63b" /></linearGradient></defs>
      <path d="M17 0H59A17 17 0 0 1 76 17V19H0V17A17 17 0 0 1 17 0z" fill="url(#nt)" />
      <path d="M0 20H76" stroke="#c9a957" strokeWidth="1.500" /><path d="M1 23H75" stroke="#bbb" strokeWidth="1.500" strokeDasharray="1.500 2" /><path d="M0 38H76M0 57H76" stroke="#d7d6d8" strokeWidth="1.500" />
    </AppIcon>) },
  { dot: "", badge: "1", icon: (
    <AppIcon bg="url(#st)">
      <defs><linearGradient id="st" x2="0" y2="1"><stop stopColor="#d5dee6" /><stop offset="1" stopColor="#8b8b8e" /></linearGradient></defs>
      <circle cx="38" cy="38" r="33" fill="#222" /><circle cx="38" cy="38" r="30" fill="none" stroke="#a5a5a8" strokeWidth="4" strokeDasharray="2 1.500" />
      <circle cx="38" cy="38" r="26" fill="#6c6c6f" /><circle cx="38" cy="38" r="21.500" fill="#2c2c2e" /><circle cx="38" cy="38" r="14" fill="#6c6c6f" /><circle cx="38" cy="38" r="10" fill="#39393b" />
      <path d="M38 38H62M38 38L26 17M38 38L26 59" stroke="#a9a9ac" strokeWidth="4" /><circle cx="38" cy="38" r="4" fill="#a9a9ac" />
    </AppIcon>) },
  { dot: "bg-[#9cc6fb]", icon: <span className="flex size-[78px] items-center justify-center rounded-full bg-[#111]"><FaSpotify className="size-[80px] text-[#65d36e]" /></span> },
];

const dockRight: { dot: string; icon: React.ReactNode }[] = [
  { dot: "bg-[#a3c4fb]", icon: (
    <AppIcon bg="#fff">
      <path d="M51 11L11 46q-1 1 0 2l3 3q1 1 3 0L51 25z" fill="#2b67ad" /><path d="M51 65L11 30q-1-1 0-2l3-3q1-1 3 0L51 51z" fill="#3079c9" /><path d="M51 11l12 5q2 1 2 3v38q0 2-2 3l-12 5z" fill="#4a9be8" /><path d="M51 11v54l-4-3V14z" fill="#3a86d4" />
    </AppIcon>) },
  { dot: "bg-[#b3c5f0]", icon: (
    <AppIcon bg="#8d9195">
      <rect x="1.500" y="1.500" width="73" height="73" rx="16" fill="#0a0a0a" stroke="#c5d3da" strokeWidth="2" /><rect x="7" y="7" width="62" height="62" rx="11" fill="#17211f" />
      <path d="M7 20H69M7 32H69M7 44H69M7 56H69M20 7V69M32 7V69M44 7V69M56 7V69" stroke="#34443f" strokeWidth="1" />
      <path d="M9 41q6-3 8 1t2-2l3-28 3 42 3-10q3-5 6 0 3-3 7-8t8 8 10 0" fill="none" stroke="#69c9ae" strokeWidth="1.800" />
    </AppIcon>) },
  { dot: "bg-[#e0c5ea]", icon: (
    <AppIcon bg="url(#ms)"><FaWhatsapp x="7" y="7" width="62" height="62" size={62} color="#f6f6f6" /></AppIcon>) },
  { dot: "bg-[#e3c3e2]", icon: (
    <AppIcon bg="#f0efee">
      <path d="M5 12q0-7 7-7H63q7 0 7 7V44H5z" fill="#94b3ea" /><path d="M5 42H70V70H12q-7 0-7-7z" fill="#27365f" /><path d="M5 58q10-6 14 2 8-6 14-2 4 6 8 12H12q-7 0-7-7z" fill="#d8d3c8" /><path d="M6 52l10-3 8 4 8-4" stroke="#dde5ee" strokeWidth="2" fill="none" />
      <path d="M40 50H70L76 75q0 4-6 4H38q-6 0-5-4z" fill="#c9cbca" stroke="#707275" strokeWidth="1" /><path d="M44 56l20-2 5 16-28 4z" fill="#8b949c" /><path d="M50 57l5 4-4 4zM59 60l5 4-6 3z" fill="#e8e8e8" /><path d="M42 56l-4 16" stroke="#fff" strokeWidth="2" />
      <rect x="38" y="37" width="33" height="16" rx="4" fill="#151515" /><ellipse cx="54.500" cy="40" rx="15.500" ry="3.500" fill="#3a3a3a" />
    </AppIcon>) },
  { dot: "bg-[#e8c3dc]", icon: (
    <AppIcon bg="#fff">
      <circle cx="39" cy="21" r="8.500" fill="#7b83eb" /><circle cx="56" cy="23" r="6" fill="#5059c9" /><path d="M50 32H64q2 0 2 2V45a10 10 0 0 1-12 10z" fill="#5059c9" /><path d="M27 32H51q3 0 3 3V49a14 14 0 0 1-27 0z" fill="#7b83eb" />
      <rect x="9" y="23" width="29" height="29" rx="3" fill="#454ab0" /><text x="23.500" y="45" textAnchor="middle" fontSize="20" fontWeight="600" fill="#fff" fontFamily="Inter">T</text>
    </AppIcon>) },
  { dot: "bg-[#f4c4cf]", icon: (
    <AppIcon bg="#fff">
      <path d="M20 16q0-3 3-3H60q3 0 3 3V25H20z" fill="#58a2e8" /><path d="M20 25H63V38H20z" fill="#3b76cc" /><path d="M20 38H63V51H20z" fill="#2a58b5" /><path d="M20 51H63V60q0 3-3 3H23q-3 0-3-3z" fill="#1d3f8c" />
      <rect x="7" y="23" width="29" height="29" rx="3" fill="#2453ad" /><text x="21.500" y="44.500" textAnchor="middle" fontSize="19" fontWeight="600" fill="#fff" fontFamily="Inter">W</text>
    </AppIcon>) },
  { dot: "bg-[#fbcbb0]", icon: (
    <AppIcon bg="#fff">
      <g fill="#62c1ea"><path d="M30.500 11a5.500 5.500 0 0 1 5.500 5.500V22h-5.500a5.500 5.500 0 0 1 0-11z" /><rect x="11" y="25" width="25.500" height="11" rx="5.500" /></g>
      <g fill="#56b083"><rect x="39" y="11" width="11" height="25.500" rx="5.500" /><path d="M53 36.500V31a5.500 5.500 0 1 1 5.500 5.500z" /></g>
      <g fill="#e2b34a"><rect x="39" y="39.500" width="25.500" height="11" rx="5.500" /><path d="M39 53.500h5.500a5.500 5.500 0 1 1-5.500 5.500z" /></g>
      <g fill="#cf2f5c"><rect x="25" y="39.500" width="11" height="25.500" rx="5.500" /><path d="M22 39.500V45a5.500 5.500 0 1 1-5.500-5.500z" /></g>
    </AppIcon>) },
];

function Slot({ dot, badge, children }: Kids & { dot: string; badge?: string }) {
  return (
    <div className="relative flex w-[98px] shrink-0 flex-col items-center pt-[15px]">
      <div className="flex size-[76px] items-center justify-center">{children}</div>
      {dot && <span className={"mt-[11px] size-[8px] rounded-full " + dot} />}
      {badge && <span className="absolute -right-[1px] top-[6px] flex size-[36px] items-center justify-center rounded-full bg-[#dd4b3e] text-[22px] text-white">{badge}</span>}
    </div>
  );
}

function Dock() {
  return (
    <div className="absolute bottom-[9px] left-[581px] flex h-[117px] w-[1863px] items-start rounded-[38px] border-2 border-white/25 bg-[linear-gradient(90deg,#17155f_0%,#191b6e_22%,#1d4079_33%,#1f4580_56%,#58445c_61%,#6a4862_79%,#7d4b34_84%,#8c5830_100%)] pl-[3px] shadow-[0_0_0_1px_rgba(0,0,0,0.5),0_0_90px_rgba(0,0,0,0.3)]">
      {dockLeft.map((d, i) => <Slot key={i} dot={d.dot} badge={d.badge}>{d.icon}</Slot>)}
      <span className="ml-[22px] mt-[14px] h-[84px] w-[2px] bg-[#5f86bd]" />
      <span className="w-[20px]" />
      {dockRight.map((d, i) => <Slot key={i} dot={d.dot}>{d.icon}</Slot>)}
      <span className="ml-[22px] mt-[14px] h-[84px] w-[2px] bg-[#b48a70]" />
      <svg className="ml-[33px] mt-[7px]" width="72" height="92" viewBox="0 0 72 92">
        <rect x="1" y="18" width="70" height="54" rx="5" fill="#4ea8ea" />
        <path d="M12 1H42L58 22V60H12z" fill="#d9d9d9" /><path d="M6 12H42L66 32V91H6z" fill="#f3f3f3" /><path d="M42 2q4 16 2 28 10-2 22 2z" fill="#c4c4c4" /><path d="M42 2q6 14 6 26 8 0 18 4z" fill="#fafafa" />
        <path d="M10 18H36M10 22H30M12 26H34M10 30H38M14 34H30M10 38H34M10 42H28M14 46H30M14 50H36M12 54H24M12 58H28M18 62H32M16 66H26" stroke="#b5b5b5" strokeWidth="1.500" />
        <text x="36" y="84" textAnchor="middle" fontSize="12" fill="#555" fontFamily="Inter">PYTHON</text>
      </svg>
      <svg className="ml-[27px] mt-[7px]" width="70" height="90" viewBox="0 0 70 90">
        <defs><linearGradient id="tr"><stop stopColor="#5e6266" /><stop offset=".3" stopColor="#85898c" /><stop offset=".6" stopColor="#626568" /><stop offset="1" stopColor="#434547" /></linearGradient></defs>
        <ellipse cx="35" cy="16" rx="34" ry="10" fill="#55585b" />
        <path d="M6 16L12 5l8 5 7-9 9 5 6-4 8 7 6-3 8 12-10 6H16z" fill="#e9e9e6" /><path d="M14 8l8 12 5-10zM40 6l8 14 5-12z" fill="#5b4a44" /><path d="M26 12l6-2 2 8z" fill="#3bb8d8" /><path d="M46 12l6 2-4 6z" fill="#c4492f" />
        <path d="M1 16q34 14 68 0L60 82q-2 8-25 8T10 82z" fill="url(#tr)" /><path d="M1 16q34 14 68 0" fill="none" stroke="#b5b8ba" strokeWidth="1.500" />
      </svg>
    </div>
  );
}

function Wallpaper() {
  return (
    <svg className="absolute left-0 top-0" width="3024" height="1964" viewBox="0 0 3024 1964">
      <defs><linearGradient id="navy"><stop stopColor="#01006c" /><stop offset=".5" stopColor="#030a7c" /><stop offset="1" stopColor="#0e3a97" /></linearGradient></defs>
      <rect y="60" width="1512" height="60" fill="#7a6aa0" /><rect x="1512" y="60" width="1512" height="60" fill="#5b5596" />
      <rect y="1780" width="1153" height="184" fill="url(#navy)" />
      <rect x="1153" y="1780" width="546" height="184" fill="#2a60ae" />
      <rect x="1699" y="1780" width="395" height="184" fill="#906e96" />
      <rect x="2093" y="1780" width="930" height="184" fill="#cb7b55" />
      <path d="M2190 1780H3024V1964H2220z" fill="#dd9c67" />
      <path d="M2484 1780L2571 1964H3024V1780z" fill="#e7ab77" />
      <path d="M2600 1780L2690 1964H3024V1780z" fill="#e5a671" />
      <path d="M2662 1780L2766 1964H3024V1780z" fill="#e6905f" />
      <path d="M2795 1780L2909 1964H3024V1780z" fill="#ae7b92" />
    </svg>
  );
}

export default function App() {
  return (
    <div className="relative flex h-[1964px] w-[3024px] flex-col overflow-hidden bg-[#01006c] font-[Inter,sans-serif]">
      <Wallpaper />
      <MenuBar />
      <div className="relative mt-[2px] flex h-[1760px] w-full flex-col overflow-hidden rounded-[22px] border-t-2 border-[#6f5c62] shadow-[0_0_0_1px_#000,0_24px_70px_rgba(0,0,0,0.85)]">
        <TabStrip />
        <Toolbar />
        <Page />
      </div>
      <Dock />
    </div>
  );
}
